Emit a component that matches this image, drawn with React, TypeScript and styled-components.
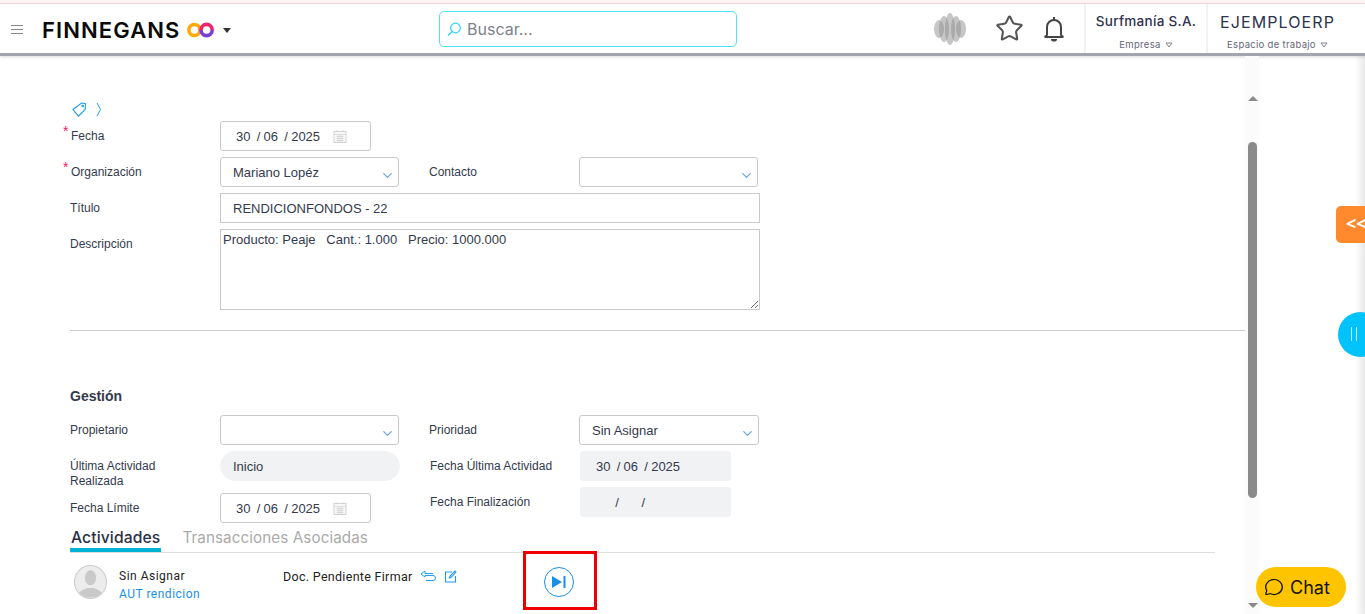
import React from "react";
import styled, { createGlobalStyle } from "styled-components";
import { ChevronDown, Star, MessageCircle } from "lucide-react";

const Global = createGlobalStyle`
  html, body { margin: 0; padding: 0; background: #fff; }
  body { font-family: "Liberation Sans", Arial, sans-serif; color: #333a4d; overflow: hidden; }
  * { box-sizing: border-box; }
`;

const Page = styled.div`
  position: relative;
  width: 1365px;
  height: 614px;
  overflow: hidden;
  display: flex;
  flex-direction: column;
  background: #fff;
`;
const TopLine = styled.div`
  height: 4px;
  flex: none;
  background: #fff3f3;
  border-bottom: 1px solid #f6dcdc;
`;
const Header = styled.header`
  height: 52px;
  flex: none;
  display: flex;
  align-items: center;
  background: #fff;
  border-bottom: 3px solid #a2a4ae;
  box-shadow: 0 1px 3px rgba(0, 0, 0, 0.15);
  font-family: "Open Sans", "Noto Sans", sans-serif;
`;
const Burger = styled.div`
  width: 12px;
  margin-left: 11px;
  margin-top: 2px;
  display: flex;
  flex-direction: column;
  gap: 3px;
  span { display: block; height: 1px; background: #888; }
`;
const Brand = styled.div`
  margin-left: 19px;
  width: 140px;
  font-family: "Inter", sans-serif;
  font-size: 22px;
  font-weight: 600;
  letter-spacing: 1.1px;
  color: #0a0a0a;
  white-space: nowrap;
  margin-top: 2px;
`;
const Logo = styled.svg`
  margin-left: 5px;
  margin-top: 2px;
  flex: none;
`;
const Caret = styled.div`
  margin-left: 8px;
  margin-top: 3px;
  width: 0;
  height: 0;
  border-left: 4.5px solid transparent;
  border-right: 4.5px solid transparent;
  border-top: 5px solid #333;
`;
const Search = styled.div`
  margin-left: 208px;
  margin-top: 1px;
  width: 298px;
  height: 36px;
  border: 1px solid #4fe3fb;
  border-radius: 5px;
  display: flex;
  align-items: center;
  padding-left: 6px;
  gap: 5px;
  font-family: "Inter", sans-serif;
  font-size: 16px;
  color: #7b838c;
`;
const HeaderIcons = styled.div`
  margin-left: 197px;
  display: flex;
  align-items: center;
  width: 150px;
  height: 100%;
`;
const Sphere = styled.svg`
  flex: none;
`;
const StarIcon = styled(Star)`
  margin-left: 29px;
  flex: none;
`;
const BellIcon = styled.svg`
  margin-left: 19px;
  flex: none;
`;
const HeaderCell = styled.div<{ $w: number }>`
  width: ${(p) => p.$w}px;
  height: 100%;
  border-left: 2px solid #f2f2f2;
  display: flex;
  flex-direction: column;
  align-items: center;
`;
const CellTitle = styled.div<{ $bold?: boolean }>`
  margin-top: ${(p) => (p.$bold ? 7 : 8)}px;
  margin-bottom: ${(p) => (p.$bold ? 7 : 6)}px;
  font-family: "Inter", sans-serif;
  font-size: ${(p) => (p.$bold ? 13.5 : 16)}px;
  font-weight: ${(p) => (p.$bold ? 500 : 400)};
  letter-spacing: ${(p) => (p.$bold ? 0.3 : 1.1)}px;
  line-height: 20px;
  color: #2c3350;
  white-space: nowrap;
`;
const CellSub = styled.div`
  font-family: "Inter", sans-serif;
  font-size: 9.5px;
  line-height: 14px;
  color: #667;
  letter-spacing: 0.3px;
  white-space: nowrap;
  display: flex;
  align-items: center;
  gap: 4px;
`;
const Body = styled.div`
  flex: 1;
  display: flex;
  min-height: 0;
`;
const Main = styled.main`
  width: 1245px;
  flex: none;
  padding: 46px 0 0 70px;
`;
const Crumb = styled.div`
  height: 19px;
  display: flex;
  align-items: flex-start;
  gap: 9px;
  margin-left: 2px;
`;
const Row = styled.div<{ $tight?: boolean }>`
  display: flex;
  align-items: flex-start;
  margin-bottom: ${(p) => (p.$tight ? 4 : 6)}px;
`;
const Label = styled.label<{ $w?: number; $inset?: number; $offset?: number }>`
  position: relative;
  display: block;
  width: ${(p) => p.$w ?? 150}px;
  flex: none;
  font-size: 12px;
  line-height: 15px;
  padding-top: 8px;
  color: #333a4d;
  padding-left: ${(p) => p.$inset ?? 0}px;
  margin-left: ${(p) => p.$offset ?? 0}px;
`;
const ReqMark = styled.span`
  position: absolute;
  left: -7px;
  top: 3px;
  color: #f0245a;
  font-size: 14px;
  line-height: 14px;
`;
const Field = styled.div<{ $w: number; $filled?: boolean; $pill?: boolean }>`
  position: relative;
  width: ${(p) => p.$w}px;
  height: 30px;
  flex: none;
  display: flex;
  align-items: center;
  border: 1px solid ${(p) => (p.$filled ? "#f1f2f4" : "#c9c9c9")};
  border-radius: ${(p) => (p.$pill ? 15 : 3)}px;
  background: ${(p) => (p.$filled ? "#f1f2f4" : "#fff")};
  padding-left: 12px;
  font-size: 13px;
  color: #333a4d;
`;
const DateText = styled.span`
  display: inline-flex;
  align-items: center;
  margin-left: 3px;
  width: 97px;
  flex: none;
  font-size: 13px;
  white-space: nowrap;
`;
const Slash = styled.span`
  margin: 0 3.2px 0 6.3px;
`;
const BlankPart = styled.span<{ $w: number }>`
  display: inline-block;
  width: ${(p) => p.$w}px;
`;
const CalendarSlot = styled.span`
  display: flex;
`;
const SelectChevron = styled(ChevronDown)`
  position: absolute;
  right: 3px;
  top: 10px;
  color: #6ea4e0;
`;
const TextInput = styled.input`
  width: 540px;
  height: 30px;
  border: 1px solid #c9c9c9;
  padding: 0 12px;
  font: 13px "Liberation Sans", Arial, sans-serif;
  color: #333a4d;
  outline: none;
`;
const TextArea = styled.textarea`
  display: block;
  width: 540px;
  height: 81px;
  border: 1px solid #c9c9c9;
  padding: 2px;
  font: 13px "Liberation Sans", Arial, sans-serif;
  color: #333a4d;
  outline: none;
  line-height: 15px;
`;
const Rule = styled.hr`
  margin: 20px 0 0 0;
  border: 0;
  border-top: 1px solid #ccc;
  height: 0;
  width: 1175px;
`;
const SectionTitle = styled.h3`
  margin: 57px 0 11px 0;
  font-size: 14px;
  line-height: 16px;
  font-weight: 700;
  color: #333a4d;
`;
const Columns = styled.div`
  display: flex;
  gap: 30px;
  height: 102px;
`;
const Column = styled.div<{ $w: number }>`
  width: ${(p) => p.$w}px;
  flex: none;
`;
const Tabs = styled.div`
  display: flex;
  width: 1145px;
  height: 30px;
  margin-top: 6px;
  border-bottom: 1px solid #ddd;
  font-family: "Inter", sans-serif;
`;
const Tab = styled.div<{ $active?: boolean }>`
  height: 29px;
  line-height: 19px;
  padding: 5px 1px 0 1px;
  margin-right: 20px;
  font-size: ${(p) => (p.$active ? 15.7 : 15.2)}px;
  font-weight: ${(p) => (p.$active ? 500 : 400)};
  color: ${(p) => (p.$active ? "#2a3045" : "#aaa")};
  border-bottom: ${(p) => (p.$active ? "4px solid #00b2d6" : "none")};
  white-space: nowrap;
  letter-spacing: 0.1px;
`;
const Activity = styled.div`
  position: relative;
  display: flex;
  padding: 12px 0 0 4px;
  font-family: "Roboto", sans-serif;
  font-size: 12px;
`;
const Avatar = styled.div`
  width: 33px;
  height: 34px;
  flex: none;
  border-radius: 50%;
  overflow: hidden;
  border: 1px solid #ccc;
  background: #ececec;
`;
const Assignee = styled.div`
  margin-left: 12px;
  width: 164px;
  flex: none;
  line-height: 18px;
  letter-spacing: 0.5px;
  padding-top: 2px;
  color: #222;
`;
const BlueText = styled.div`
  color: #1a8fe8;
`;
const DocCell = styled.div`
  display: flex;
  align-items: flex-start;
  gap: 7px;
  color: #222;
  line-height: 18px;
  padding-top: 3px;
  letter-spacing: 0.3px;
  width: 261px;
  font-size: 12.5px;
  white-space: nowrap;
`;
const DocIcon = styled.svg`
  margin-top: 2px;
  flex: none;
`;
const NextCircle = styled.div`
  width: 30px;
  height: 30px;
  margin-top: 2px;
  flex: none;
  border: 1px solid #1a8fe8;
  border-radius: 50%;
  display: flex;
  align-items: center;
  justify-content: center;
`;
const Annotation = styled.div`
  position: absolute;
  left: 453px;
  top: -2px;
  width: 74px;
  height: 59px;
  border: 3px solid #ee0000;
`;
const ScrollTrack = styled.div`
  width: 14px;
  flex: none;
  height: 100%;
  background: #fbfbfb;
  position: relative;
`;
const Thumb = styled.div`
  position: absolute;
  left: 3px;
  top: 86px;
  width: 9px;
  height: 356px;
  border-radius: 5px;
  background: #8a8a8a;
`;
const Arrow = styled.div<{ $down?: boolean }>`
  position: absolute;
  left: 3px;
  ${(p) => (p.$down ? "bottom: 6px;" : "top: 40px;")}
  width: 0;
  height: 0;
  border-left: 5px solid transparent;
  border-right: 5px solid transparent;
  ${(p) => (p.$down ? "border-top: 5px solid #8a8a8a;" : "border-bottom: 5px solid #8a8a8a;")}
`;
const EdgeShade = styled.div`
  position: absolute;
  right: 0;
  top: 56px;
  bottom: 0;
  width: 10px;
  background: linear-gradient(to right, rgba(0,0,0,0), rgba(0,0,0,0.09));
  pointer-events: none;
`;
const SideTab = styled.div`
  position: absolute;
  left: 1336px;
  top: 206px;
  width: 29px;
  height: 37px;
  border-radius: 5px 0 0 5px;
  background: #ff8a2e;
  color: #fff;
  font-family: "Open Sans", sans-serif;
  font-weight: 700;
  font-size: 18px;
  line-height: 34px;
  padding-left: 10px;
  overflow: hidden;
  white-space: nowrap;
`;
const SideCircle = styled.div`
  position: absolute;
  left: 1338px;
  top: 312px;
  width: 45px;
  height: 45px;
  border-radius: 50%;
  background: #00c3fb;
`;
const PauseBars = styled.div`
  position: absolute;
  left: 13px;
  top: 15px;
  width: 6px;
  height: 14px;
  border-left: 1px solid #c9f3ff;
  border-right: 1px solid #c9f3ff;
`;
const ChatButton = styled.div`
  position: absolute;
  left: 1256px;
  top: 567px;
  width: 90px;
  height: 40px;
  border-radius: 20px;
  background: #ffc400;
  display: flex;
  align-items: center;
  gap: 7px;
  padding-left: 9px;
  font-family: "Inter", sans-serif;
  font-size: 18px;
  color: #111;
`;
const ChatIcon = styled(MessageCircle)`
  transform: scaleX(1.1);
`;

const Calendar = () => (
  <svg width="14" height="14" viewBox="0 0 14 14" fill="none">
    <rect x="1" y="2.5" width="12" height="11" fill="#f8f8f8" stroke="#d2d2d2" />
    <path d="M1 5.5h12M4 1v2M10 1v2M3.5 7.5h7M3.5 9.5h7M3.5 11.5h7M5 6v7M7 6v7M9 6v7" stroke="#d2d2d2" strokeWidth="0.7" />
  </svg>
);

const DateField = ({ filled, blank }: { filled?: boolean; blank?: boolean }) => (
  <Field $w={151} $filled={filled}>
    <DateText>
      {blank ? (
        <>
          <BlankPart $w={13} />
          <Slash>/</Slash>
          <BlankPart $w={13} />
          <Slash>/</Slash>
        </>
      ) : (
        <>
          30<Slash>/</Slash>06<Slash>/</Slash>2025
        </>
      )}
    </DateText>
    {!filled && (
      <CalendarSlot>
        <Calendar />
      </CalendarSlot>
    )}
  </Field>
);

const Select = ({ w, value }: { w: number; value?: string }) => (
  <Field $w={w}>
    {value}
    <SelectChevron size={15} strokeWidth={2} />
  </Field>
);

const MiniCaret = () => (
  <svg width="8" height="6" viewBox="0 0 8 6" fill="none" stroke="#667" strokeWidth="0.8">
    <path d="M1 1h6L4 5z" />
  </svg>
);

export default function App() {
  return (
    <Page>
      <Global />
      <TopLine />
      <Header>
        <Burger>
          <span />
          <span />
          <span />
        </Burger>
        <Brand>FINNEGANS</Brand>
        <Logo width="28" height="16" viewBox="0 0 28 16" fill="none">
          <circle cx="7.4" cy="8" r="5.5" stroke="#ffa90a" strokeWidth="3.6" />
          <path d="M14 8A5.6 5.6 0 0 1 25.2 8" stroke="#f0246e" strokeWidth="3.6" />
          <path d="M25.2 8A5.6 5.6 0 0 1 14 8" stroke="#7b3fd0" strokeWidth="3.6" />
        </Logo>
        <Caret />
        <Search>
          <svg width="16" height="16" viewBox="0 0 16 16" fill="none" stroke="#2fd6f5" strokeWidth="1.3">
            <circle cx="9.5" cy="7" r="4.8" />
            <path d="M6 10.5L2 14.5" />
          </svg>
          Buscar...
        </Search>
        <HeaderIcons>
          <Sphere width="32" height="32" viewBox="0 0 32 32">
            <g fill="#8d8d8d" fillOpacity="0.5">
              <ellipse cx="5" cy="16" rx="5" ry="9" />
              <ellipse cx="27" cy="16" rx="5" ry="9" />
              <ellipse cx="10" cy="16" rx="5" ry="13" />
              <ellipse cx="22" cy="16" rx="5" ry="13" />
              <ellipse cx="16" cy="16" rx="5" ry="16" />
            </g>
          </Sphere>
          <StarIcon size={29} strokeWidth={1.7} color="#555" />
          <BellIcon width="22" height="26" viewBox="0 0 22 26" fill="none" stroke="#444" strokeWidth="2">
            <path d="M11 1v3M4 18.5V11a7 7 0 0 1 14 0v7.5M1.5 21c1.5-.5 2.5-1.2 2.5-2.5M20.5 21c-1.5-.5-2.5-1.2-2.5-2.5M1.5 21h19" />
            <path d="M8 23h6a3 2.6 0 0 1-6 0z" fill="#444" stroke="none" />
          </BellIcon>
        </HeaderIcons>
        <HeaderCell $w={122}>
          <CellTitle $bold>Surfmanía S.A.</CellTitle>
          <CellSub>
            Empresa <MiniCaret />
          </CellSub>
        </HeaderCell>
        <HeaderCell $w={141}>
          <CellTitle>EJEMPLOERP</CellTitle>
          <CellSub>
            Espacio de trabajo <MiniCaret />
          </CellSub>
        </HeaderCell>
      </Header>
      <Body>
        <Main>
          <Crumb>
            <svg width="15" height="15" viewBox="0 0 15 15" fill="none" stroke="#1f9bf0" strokeWidth="1.1">
              <path d="M1 7.5L9.5 1l4 .8-.3 5.7L6.5 14.2z" />
              <circle cx="10.7" cy="4" r="0.7" />
            </svg>
            <svg width="6" height="15" viewBox="0 0 6 15" fill="none" stroke="#1f9bf0" strokeWidth="1">
              <path d="M1 1l3.5 6.5L1 14" />
            </svg>
          </Crumb>
          <Row>
            <Label $inset={1}>
              <ReqMark>*</ReqMark>Fecha
            </Label>
            <DateField />
          </Row>
          <Row>
            <Label $inset={1}>
              <ReqMark>*</ReqMark>Organización
            </Label>
            <Select w={179} value="Mariano Lopéz" />
            <Label $offset={30}>Contacto</Label>
            <Select w={179} />
          </Row>
          <Row>
            <Label>Título</Label>
            <TextInput readOnly defaultValue="RENDICIONFONDOS - 22" />
          </Row>
          <Row>
            <Label>Descripción</Label>
            <TextArea readOnly defaultValue={"Producto: Peaje   Cant.: 1.000   Precio: 1000.000"} />
          </Row>
          <Rule />
          <SectionTitle>Gestión</SectionTitle>
          <Columns>
            <Column $w={329}>
              <Row>
                <Label>Propietario</Label>
                <Select w={179} />
              </Row>
              <Row $tight>
                <Label>
                  Última Actividad
                  <br />
                  Realizada
                </Label>
                <Field $w={180} $filled $pill>
                  Inicio
                </Field>
              </Row>
              <Row>
                <Label>Fecha Límite</Label>
                <DateField />
              </Row>
            </Column>
            <Column $w={331}>
              <Row>
                <Label>Prioridad</Label>
                <Select w={180} value="Sin Asignar" />
              </Row>
              <Row>
                <Label $w={151} $inset={1}>
                  Fecha Última Actividad
                </Label>
                <DateField filled />
              </Row>
              <Row>
                <Label $w={151} $inset={1}>
                  Fecha Finalización
                </Label>
                <DateField filled blank />
              </Row>
            </Column>
          </Columns>
          <Tabs>
            <Tab $active>Actividades</Tab>
            <Tab>Transacciones Asociadas</Tab>
          </Tabs>
          <Activity>
            <Avatar>
              <svg width="31" height="32" viewBox="0 0 33 33" fill="#c9c9c9">
                <ellipse cx="16.5" cy="12" rx="6" ry="8" />
                <path d="M3 33c0-7 6-8 10-10h7c4 2 10 3 10 10z" />
              </svg>
            </Avatar>
            <Assignee>
              Sin Asignar
              <BlueText>AUT rendicion</BlueText>
            </Assignee>
            <DocCell>
              Doc. Pendiente Firmar
              <DocIcon width="17" height="12" viewBox="0 0 17 12" fill="none" stroke="#1f9bf0" strokeWidth="1">
                <path d="M5 1L1 4l4 3V5.5h8a2.5 2.5 0 0 1 0 5H6M5 1v2.5h8" />
              </DocIcon>
              <DocIcon width="13" height="13" viewBox="0 0 13 13" fill="none" stroke="#1f9bf0" strokeWidth="1.1">
                <path d="M8 2H1.5v10h10V6M5.5 8l.5-2L11 1l1 1L7.5 7z" />
              </DocIcon>
            </DocCell>
            <NextCircle>
              <svg width="16" height="14" viewBox="0 0 16 14">
                <path d="M1 1v12l10-6z" fill="#1a8fe8" />
                <rect x="12.5" y="1" width="2" height="12" fill="#1a8fe8" />
              </svg>
            </NextCircle>
            <Annotation />
          </Activity>
        </Main>
        <ScrollTrack>
          <Arrow />
          <Thumb />
          <Arrow $down />
        </ScrollTrack>
      </Body>
      <EdgeShade />
      <SideTab>&lt;&lt;</SideTab>
      <SideCircle>
        <PauseBars />
      </SideCircle>
      <ChatButton>
        <ChatIcon size={18} strokeWidth={1.6} />
        Chat
      </ChatButton>
    </Page>
  );
}
